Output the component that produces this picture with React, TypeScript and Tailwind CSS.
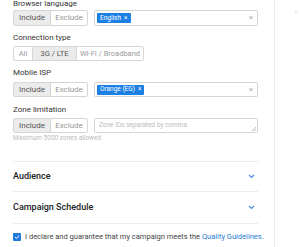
const font = { fontFamily: "Roboto, 'Liberation Sans', sans-serif" };

function Chevron() {
  return (
    <svg width="7" height="5" viewBox="0 0 7 5" fill="none">
      <polyline points="1,1 3.5,3.5 6,1" stroke="#4a8fdb" strokeWidth="1.2" />
    </svg>
  );
}

function IncludeExclude() {
  return (
    <div className="flex h-full w-[75px] shrink-0 border border-[#d6d6d6] rounded-[2px] text-[8px]">
      <div className="flex w-[37px] items-center justify-center bg-[#ebebeb] text-[#555] border-r border-[#d6d6d6]">
        Include
      </div>
      <div className="flex flex-1 items-center justify-center text-[#999]">Exclude</div>
    </div>
  );
}

function TagSelect({ tag }: { tag: string }) {
  return (
    <div className="flex h-full flex-1 items-center border border-[#d6d6d6] rounded-[2px] pl-[2px] pr-[4px]">
      <span className="flex h-[10px] items-center gap-[3px] rounded-[1px] bg-[#1b7fe3] px-[3px] text-[6.5px] leading-none text-white">
        {tag}
        <span className="text-[6.5px]">×</span>
      </span>
      <span className="ml-auto text-[8px] leading-none text-[#aaa]">×</span>
    </div>
  );
}

export default function App() {
  return (
    <div className="flex h-[247px] w-[300px] overflow-hidden bg-white" style={font}>
      <div className="flex w-[275px] flex-col border-r border-[#ececec] pl-[13px] pr-[16px]">
        <div className="mt-[-1px] h-[10px] text-[8px] leading-[10px] text-[#333]">Browser language</div>
        <div className="mt-[1px] flex h-[16px] gap-[6px]">
          <IncludeExclude />
          <TagSelect tag="English" />
        </div>

        <div className="mt-[7px] h-[10px] text-[8px] leading-[10px] text-[#333]">Connection type</div>
        <div className="mt-[3px] flex h-[15px] w-[131px] border border-[#d6d6d6] rounded-[2px] text-[7.5px] text-[#999]">
          <div className="flex w-[19px] items-center justify-center border-r border-[#d6d6d6]">All</div>
          <div className="flex w-[44px] items-center justify-center border-r border-[#d6d6d6] bg-[#ebebeb] text-[#555]">
            3G / LTE
          </div>
          <div className="flex flex-1 items-center justify-center">WI-FI / Broadband</div>
        </div>

        <div className="mt-[7px] h-[10px] text-[8px] leading-[10px] text-[#333]">Mobile ISP</div>
        <div className="mt-[4px] flex h-[15px] gap-[6px]">
          <IncludeExclude />
          <TagSelect tag="Orange (EG)" />
        </div>

        <div className="mt-[8px] h-[10px] text-[8px] leading-[10px] text-[#333]">Zone limitation</div>
        <div className="mt-[3px] flex h-[15px] gap-[6px]">
          <IncludeExclude />
          <div className="relative flex flex-1 items-center border border-[#d6d6d6] rounded-[2px] px-[4px] text-[6.5px] text-[#bbb]">
            Zone IDs separated by comma
            <svg className="absolute bottom-[1px] right-[1px]" width="5" height="5" viewBox="0 0 5 5">
              <line x1="1" y1="5" x2="5" y2="1" stroke="#999" strokeWidth="0.6" />
              <line x1="3" y1="5" x2="5" y2="3" stroke="#999" strokeWidth="0.6" />
            </svg>
          </div>
        </div>
        <div className="mt-[1px] h-[8px] text-[6.5px] leading-[8px] text-[#bbb]">Maximum 5000 zones allowed</div>

        <div className="mt-[19px] flex h-[31px] items-center justify-between border-y border-[#ececec] pr-[3px]">
          <span className="text-[9px] font-medium text-[#222]">Audience</span>
          <Chevron />
        </div>
        <div className="flex h-[32px] items-center justify-between border-b border-[#ececec] pr-[3px]">
          <span className="text-[9px] font-medium text-[#222]">Campaign Schedule</span>
          <Chevron />
        </div>

        <div className="mt-[8px] flex h-[10px] items-center gap-[4px] whitespace-nowrap text-[7.5px] text-[#444]">
          <span className="flex h-[8px] w-[8px] shrink-0 items-center justify-center rounded-[1px] bg-[#1e7bd9]">
            <svg width="6" height="6" viewBox="0 0 6 6" fill="none">
              <polyline points="1,3 2.5,4.5 5,1.5" stroke="white" strokeWidth="1" />
            </svg>
          </span>
          <span>
            I declare and guarantee that my campaign meets the{" "}
            <span className="text-[#2a7ad5]">Quality Guidelines</span>.
          </span>
        </div>
      </div>
      <div className="relative flex-1">
        <span className="absolute left-[20px] top-[6px] text-[6px] text-[#aaa]">›</span>
        <span className="absolute left-[20px] top-[42px] text-[6px] text-[#aaa]">·</span>
      </div>
    </div>
  );
}
